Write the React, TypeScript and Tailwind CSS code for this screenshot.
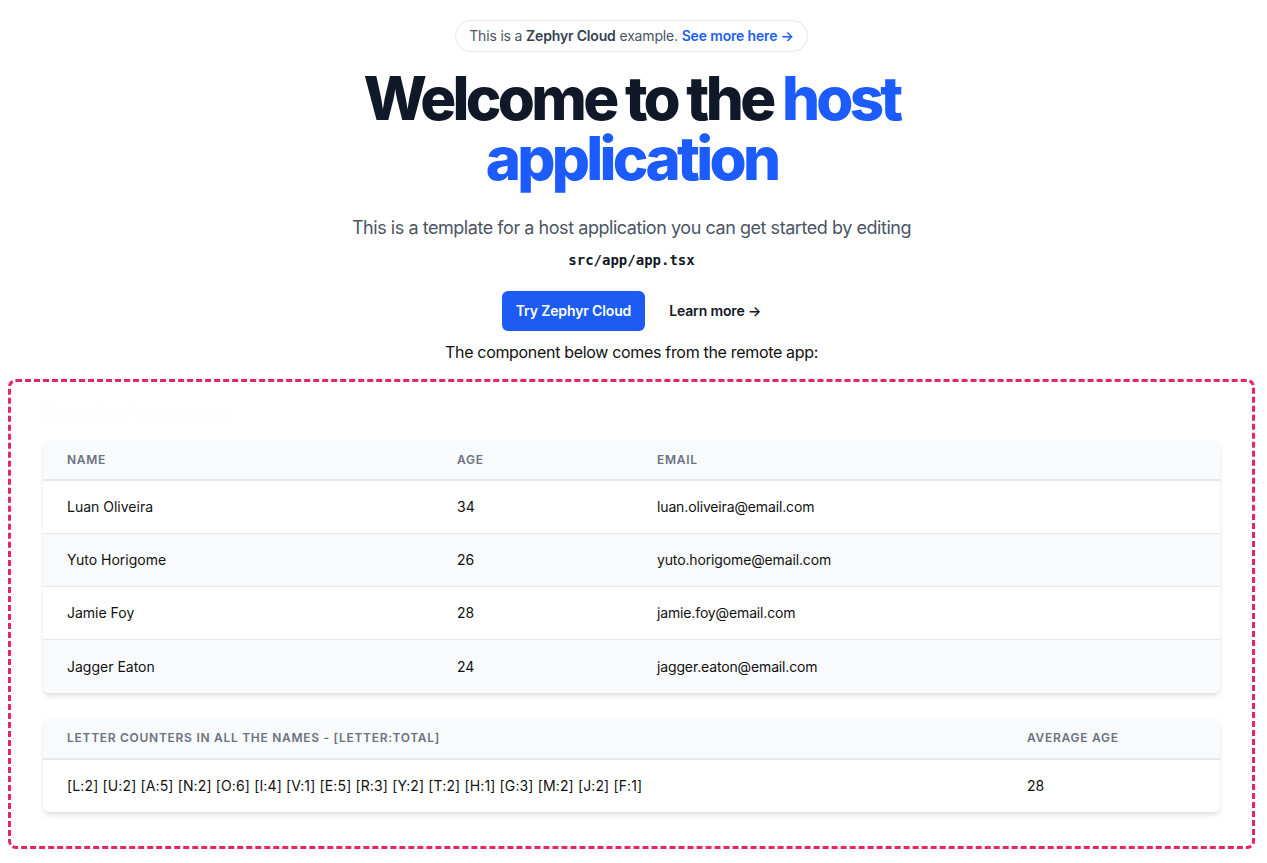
import React from "react";

const people = [
  { name: "Luan Oliveira", age: 34, email: "luan.oliveira@email.com" },
  { name: "Yuto Horigome", age: 26, email: "yuto.horigome@email.com" },
  { name: "Jamie Foy", age: 28, email: "jamie.foy@email.com" },
  { name: "Jagger Eaton", age: 24, email: "jagger.eaton@email.com" },
];

export default function App() {
  return (
    <div
      className="min-h-[863px] bg-white text-[#111111] flex flex-col items-center pt-5 pr-1"
      style={{ fontFamily: "Inter, 'Noto Sans', sans-serif" }}
    >
      <div className="h-8 rounded-full border border-[#e5e7eb] px-[13px] flex items-center text-sm tracking-[-0.012em] text-[#4b5563]">
        <span>
          This is a <span className="font-semibold text-[#374151]">Zephyr Cloud</span> example.{" "}
          <a className="font-semibold text-[#1e5ef3]">See more here →</a>
        </span>
      </div>

      <h1 className="mt-4 max-w-[600px] text-center text-[60px] leading-[60px] font-extrabold tracking-[-0.062em] text-[#111827]">
        Welcome to the <span className="text-[#1c5cff]">host application</span>
      </h1>

      <p className="mt-[26px] text-lg leading-7 tracking-[-0.025em] text-[#4b5563]">
        This is a template for a host application you can get started by editing
      </p>
      <code
        className="mt-2 text-sm leading-5 font-bold text-[#111827]"
        style={{ fontFamily: "'DejaVu Sans Mono', monospace" }}
      >
        src/app/app.tsx
      </code>

      <div className="mt-[21px] flex items-center gap-6">
        <a className="h-10 px-3.5 rounded-md bg-[#1c5cf5] text-white text-sm font-semibold tracking-[-0.01em] flex items-center">
          Try Zephyr Cloud
        </a>
        <a className="text-sm font-semibold tracking-[-0.01em] text-[#111827]">Learn more →</a>
      </div>

      <p className="mt-[9px] text-base leading-6 tracking-[-0.02em] text-[#111]">
        The component below comes from the remote app:
      </p>

      <div className="mt-[15px] w-[1247px] border-[3px] border-dashed border-[#e8265e] rounded-lg px-8 pt-4 pb-[34px]">
        <h2 className="text-xl leading-7 font-bold text-[#fefefe] mb-[14px]">Remote Application</h2>

        <div className="rounded-md shadow-md overflow-hidden bg-white">
          <div className="grid grid-cols-[414px_200px_1fr] bg-[#f9fafb] h-[41px] items-center border-b-2 border-[#e5e7eb] text-xs font-semibold tracking-[0.06em] text-[#6b7280] uppercase">
            <div className="pl-6">Name</div>
            <div>Age</div>
            <div>Email</div>
          </div>
          {people.map((p, i) => (
            <div
              key={p.name}
              className={`grid grid-cols-[414px_200px_1fr] h-[53px] items-center text-sm text-[#111] ${
                i % 2 === 1 ? "bg-[#f9fafb]" : "bg-white"
              } ${i < people.length - 1 ? "border-b border-[#e5e7eb]" : ""}`}
            >
              <div className="pl-6">{p.name}</div>
              <div>{p.age}</div>
              <div className="tracking-[-0.01em]">{p.email}</div>
            </div>
          ))}
        </div>

        <div className="mt-[25px] rounded-md shadow-md overflow-hidden bg-white">
          <div className="grid grid-cols-[984px_1fr] bg-[#f9fafb] h-[42px] items-center border-b-2 border-[#e5e7eb] text-xs font-semibold tracking-[0.06em] text-[#6b7280] uppercase">
            <div className="pl-6">Letter counters in all the names - [letter:total]</div>
            <div>Average age</div>
          </div>
          <div className="grid grid-cols-[984px_1fr] h-[52px] items-center text-sm text-[#111]">
            <div className="pl-6 tracking-[0.01em]">
              [L:2] [U:2] [A:5] [N:2] [O:6] [I:4] [V:1] [E:5] [R:3] [Y:2] [T:2] [H:1] [G:3] [M:2] [J:2] [F:1]
            </div>
            <div>28</div>
          </div>
        </div>
      </div>
    </div>
  );
}
